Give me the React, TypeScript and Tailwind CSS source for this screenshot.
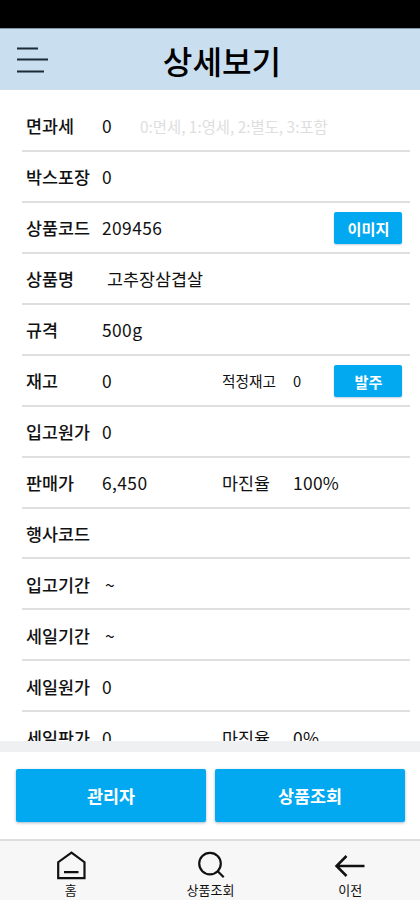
import React from "react";

type Row = {
  label: string;
  value?: string;
  hint?: string;
  extra?: { label: string; value: string; small?: boolean };
  action?: string;
  indent?: string;
};

const rows: Row[] = [
  { label: "면과세", value: "0", hint: "0:면세, 1:영세, 2:별도, 3:포함" },
  { label: "박스포장", value: "0" },
  { label: "상품코드", value: "209456", action: "이미지" },
  { label: "상품명", value: "고추장삼겹살", indent: "pl-[5px] tracking-normal" },
  { label: "규격", value: "500g" },
  { label: "재고", value: "0", extra: { label: "적정재고", value: "0", small: true }, action: "발주" },
  { label: "입고원가", value: "0" },
  { label: "판매가", value: "6,450", extra: { label: "마진율", value: "100%" } },
  { label: "행사코드" },
  { label: "입고기간", value: "~", indent: "pl-[3px]" },
  { label: "세일기간", value: "~", indent: "pl-[3px]" },
  { label: "세일원가", value: "0" },
  { label: "세일판가", value: "0", extra: { label: "마진율", value: "0%" } },
];

function DetailRow({ row }: { row: Row }) {
  return (
    <div className="flex h-[50.95px] shrink-0 items-center whitespace-nowrap border-b-2 border-[#dfdfdf] pl-1 pr-2 pt-[2px]">
      <span className="w-[76px] shrink-0 font-medium">{row.label}</span>
      <span className={`shrink-0 tracking-[0.4px] ${row.hint ? "w-[38px]" : "w-[120px]"} ${row.indent ?? ""}`}>
        {row.value}
      </span>
      {row.hint && <span className="text-[15.4px] text-[#dedede]">{row.hint}</span>}
      {row.extra && (
        <>
          <span className={`w-[71px] shrink-0 ${row.extra.small ? "text-[14.7px]" : ""}`}>{row.extra.label}</span>
          <span className={row.extra.small ? "text-[14.7px]" : "tracking-[0.3px]"}>{row.extra.value}</span>
        </>
      )}
      {row.action && (
        <button className="ml-auto h-8 w-[68px] rounded-[2px] bg-[#03a9f0] pl-px text-[15.2px] font-bold text-white shadow-[0_1px_2px_rgba(0,60,120,0.25)]">
          {row.action}
        </button>
      )}
    </div>
  );
}

function NavItem({ label, children }: { label: string; children: React.ReactNode }) {
  return (
    <div className="flex flex-1 flex-col items-center pt-[10px]">
      <svg width="32" height="32" viewBox="0 0 32 32" fill="none" stroke="#111" strokeWidth="2.2">
        {children}
      </svg>
      <span className="-mt-px text-[13px] leading-4">{label}</span>
    </div>
  );
}

export default function App() {
  return (
    <div className="flex h-[900px] w-[420px] flex-col overflow-hidden bg-white font-['Noto_Sans_CJK_KR',sans-serif] text-[17.4px] text-[#111]">
      <div className="h-[29px] shrink-0 border-b border-[#8497a8] bg-black" />
      <header className="grid h-[61px] shrink-0 grid-cols-[48px_1fr_40px] items-center bg-[#c9deef] pl-4">
        <svg width="32" height="28" viewBox="0 0 32 28" stroke="#1c2b36" strokeWidth="2">
          <path d="M1 2.5h21M1 13.5h31M1 25.5h27" />
        </svg>
        <h1 className="pt-px text-center text-[32.2px] font-medium leading-none text-black">상세보기</h1>
      </header>
      <main className="flex h-[651px] shrink-0 flex-col overflow-hidden pl-[22px] pr-[10px] pt-[11px]">
        {rows.map((row) => (
          <DetailRow key={row.label} row={row} />
        ))}
      </main>
      <div className="h-[11px] shrink-0 bg-[#eff0f2]" />
      <div className="flex h-[87px] shrink-0 gap-[9px] pl-4 pr-[15px] pt-[17px]">
        {["관리자", "상품조회"].map((label) => (
          <button
            key={label}
            className="h-[53px] flex-1 rounded-[2px] bg-[#03a9f0] pt-[2px] text-[17.4px] font-bold text-white shadow-[0_1px_3px_rgba(0,40,100,0.35)]"
          >
            {label}
          </button>
        ))}
      </div>
      <nav className="flex h-[61px] shrink-0 border-t-2 border-[#dddddd] bg-[#f7f7f7] pl-px">
        <NavItem label="홈">
          <path d="M3.2 27.2V11.2L16.5 1.5L29.5 11.2v16zM9 21.2h14.5" />
        </NavItem>
        <NavItem label="상품조회">
          <circle cx="15" cy="12.6" r="10.8" />
          <path d="M22.5 20l6.2 6.2" />
        </NavItem>
        <NavItem label="이전">
          <path d="M12.5 5L2.5 15l10 10M2.5 15h28" strokeWidth="2.5" />
        </NavItem>
      </nav>
    </div>
  );
}
